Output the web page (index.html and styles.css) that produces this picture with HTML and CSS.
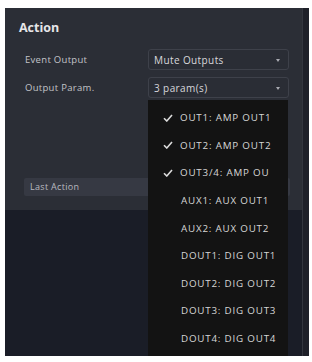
FILE: index.html
```html
<!DOCTYPE html>
<html lang="en">
<head>
  <meta charset="UTF-8" />
  <meta name="viewport" content="width=device-width, initial-scale=1.0"/>
  <title>Action</title>
  <link rel="stylesheet" href="styles.css">
</head>
<body>
  <div class="frame">
    <div class="main">
      <div class="card">
        <h3 class="title">Action</h3>

        <div class="row">
          <span class="label">Event Output</span>
          <div class="select">Mute Outputs<span class="caret"></span></div>
        </div>

        <div class="row">
          <span class="label">Output Param.</span>
          <div class="select">3 param(s)<span class="caret"></span>
            <ul class="menu">
              <li class="checked"><svg viewBox="0 0 10 8"><polyline points="1,4.2 3.8,7 9,1"/></svg><span>OUT1: AMP OUT1</span></li>
              <li class="checked"><svg viewBox="0 0 10 8"><polyline points="1,4.2 3.8,7 9,1"/></svg><span>OUT2: AMP OUT2</span></li>
              <li class="checked"><svg viewBox="0 0 10 8"><polyline points="1,4.2 3.8,7 9,1"/></svg><span>OUT3/4: AMP OU</span></li>
              <li><span>AUX1: AUX OUT1</span></li>
              <li><span>AUX2: AUX OUT2</span></li>
              <li><span>DOUT1: DIG OUT1</span></li>
              <li><span>DOUT2: DIG OUT2</span></li>
              <li><span>DOUT3: DIG OUT3</span></li>
              <li><span>DOUT4: DIG OUT4</span></li>
            </ul>
          </div>
        </div>

        <div class="last">Last Action</div>
      </div>
      <div class="lower"></div>
    </div>
    <div class="scroll"></div>
  </div>
</body>
</html>
```

FILE: styles.css
```css
body {
  margin: 0;
  background: #fff;
  font-family: 'Open Sans', sans-serif;
}
.frame {
  display: flex;
  width: 304px;
  height: 348px;
  margin: 8px 0 0 5px;
  background: #1a1d27;
  overflow: hidden;
}
.main {
  flex: 1;
  display: flex;
  flex-direction: column;
}
.card {
  height: 202px;
  box-sizing: border-box;
  padding: 12px 0 0 14px;
  background: #2b2e36;
}
.title {
  margin: 0 0 13px;
  font-size: 12.5px;
  line-height: 16px;
  font-weight: 700;
  color: #e6e6e8;
}
.row {
  display: flex;
  align-items: center;
  margin-bottom: 7px;
  padding-left: 6px;
}
.label {
  width: 123px;
  font-size: 9.5px;
  letter-spacing: 0.3px;
  color: #c2c3c8;
}
.select {
  position: relative;
  display: flex;
  align-items: center;
  width: 141px;
  height: 21px;
  box-sizing: border-box;
  padding-left: 5px;
  border: 1px solid #3e414a;
  border-radius: 3px;
  background: #2a2d35;
  font-size: 10px;
  letter-spacing: 0.4px;
  color: #d8d8dc;
}
.caret {
  position: absolute;
  right: 8px;
  top: 9px;
  border-left: 2.5px solid transparent;
  border-right: 2.5px solid transparent;
  border-top: 3px solid #a9abb2;
}
.menu {
  position: absolute;
  left: -1px;
  top: 22px;
  width: 140px;
  margin: 0;
  padding: 4px 0 12px;
  list-style: none;
  background: #131313;
  z-index: 2;
}
.menu li {
  display: flex;
  align-items: center;
  height: 27.6px;
  padding-left: 33px;
  font-size: 9.8px;
  letter-spacing: 0.8px;
  color: #d6d6d6;
  white-space: nowrap;
}
.menu li.checked {
  padding-left: 15px;
}
.menu svg {
  width: 10px;
  height: 8px;
  margin-right: 7px;
  fill: none;
  stroke: #dcdcdc;
  stroke-width: 1.6;
}
.last {
  margin: 80px 0 0 5px;
  height: 18px;
  line-height: 18px;
  padding-left: 6px;
  font-size: 9px;
  letter-spacing: 0.3px;
  color: #b9bac0;
  background: #363943;
  border-radius: 2px;
  width: 260px;
}
.lower {
  flex: 1;
}
.scroll {
  width: 6px;
  background: #1e2029;
  border-left: 1px solid #33363f;
}
```
